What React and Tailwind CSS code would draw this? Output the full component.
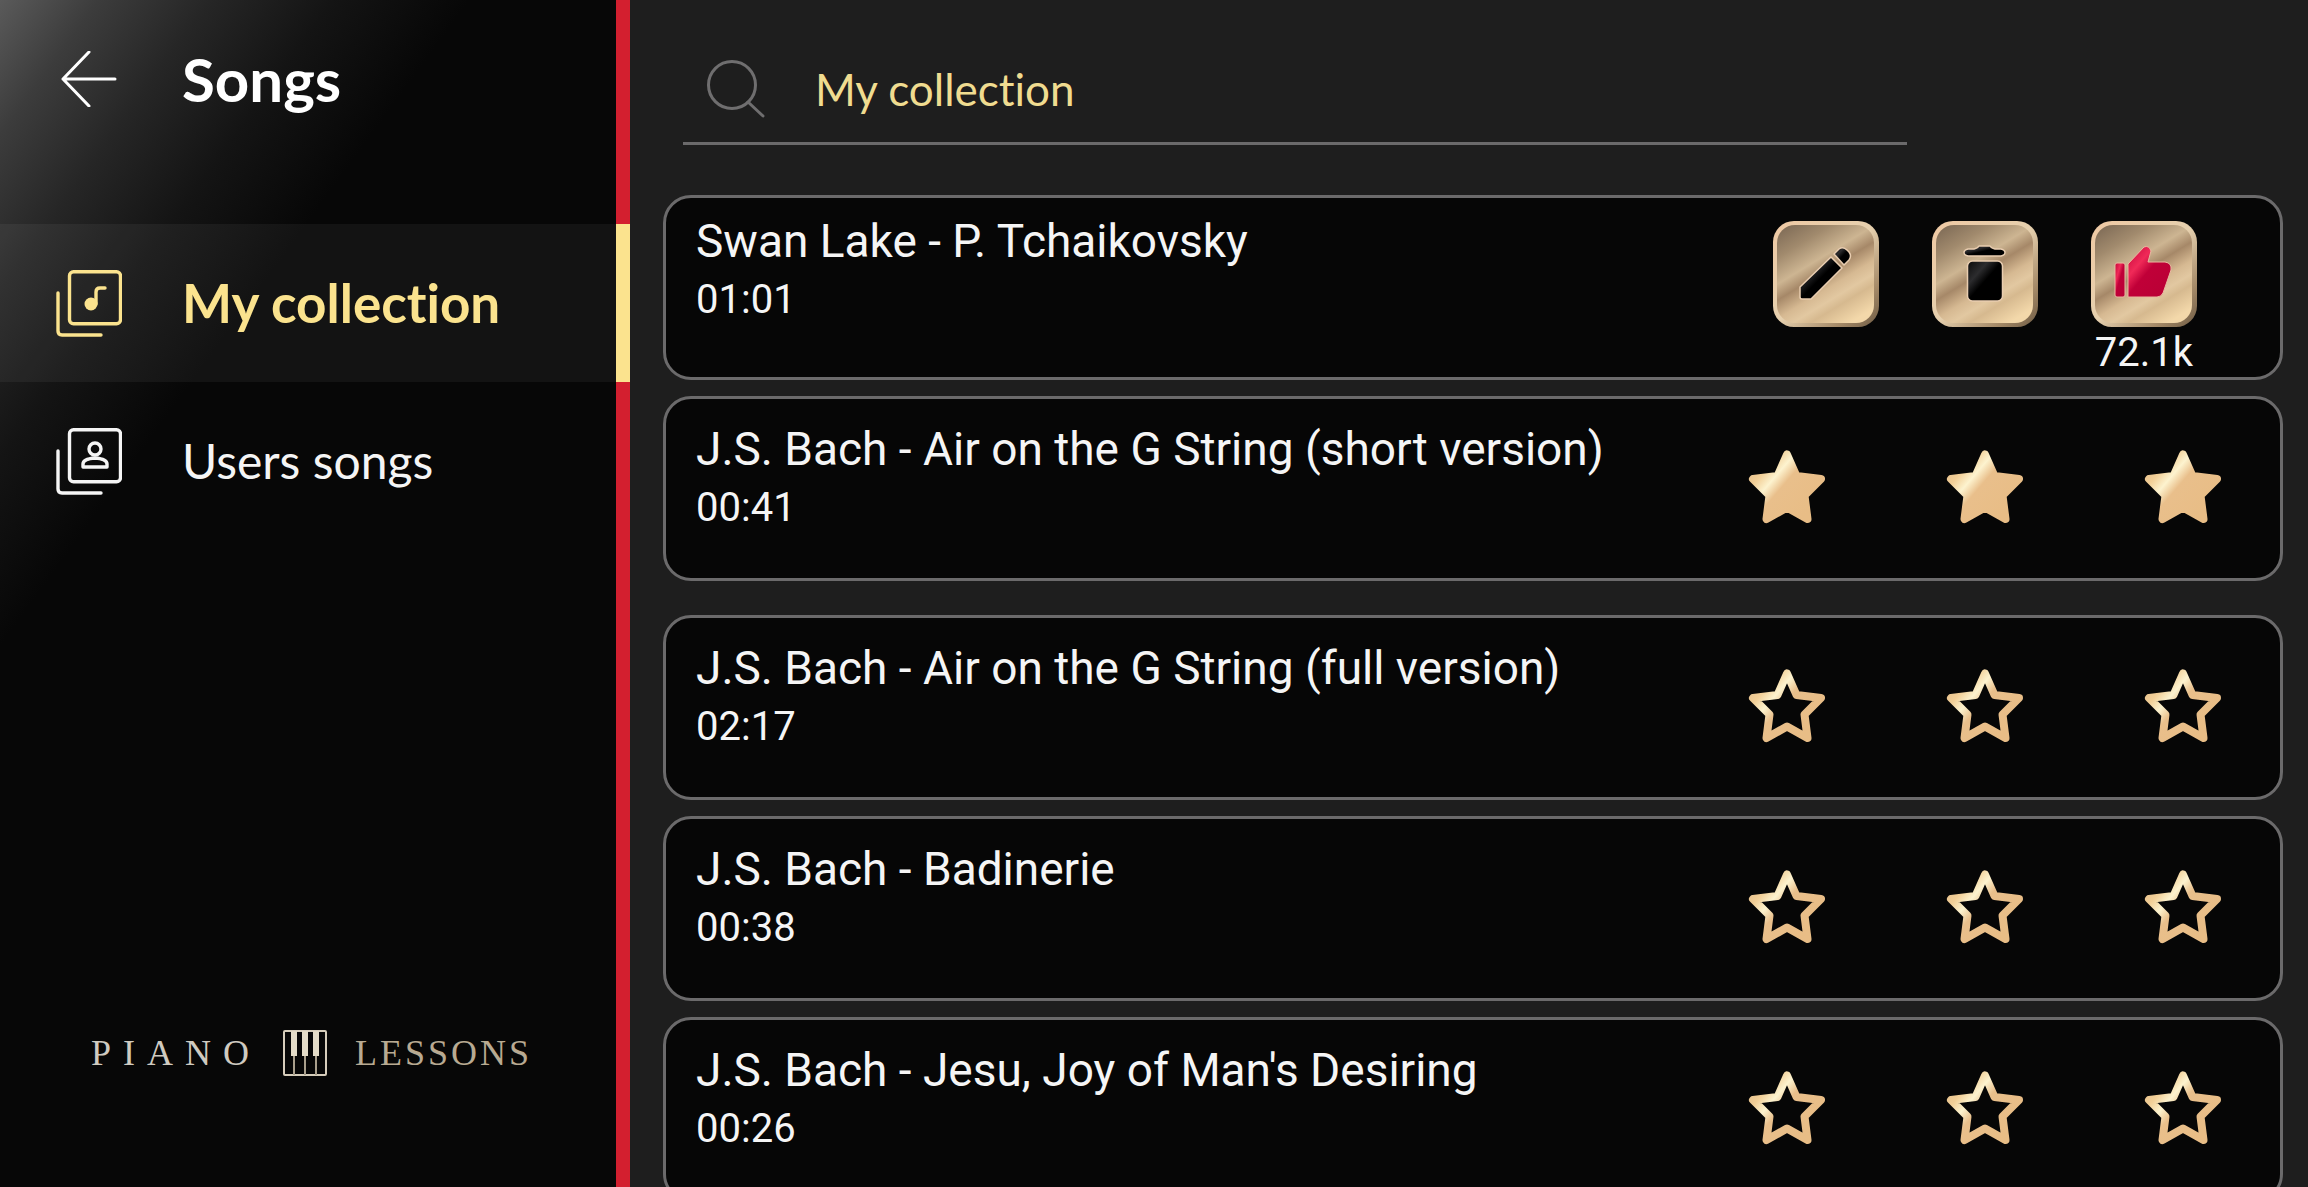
import React, { useState } from 'react';

const SONGS = [
  { title: "J.S. Bach - Air on the G String (short version)", time: '00:41', stars: 3 },
  { title: "J.S. Bach - Air on the G String (full version)", time: '02:17', stars: 0 },
  { title: "J.S. Bach - Badinerie", time: '00:38', stars: 0 },
  { title: "J.S. Bach - Jesu, Joy of Man's Desiring", time: '00:26', stars: 0 },
];

// Gradients shared by every icon on the page
function Gradients() {
  return (
    <svg className="absolute w-0 h-0" aria-hidden="true">
      <defs>
        <linearGradient id="star" gradientUnits="userSpaceOnUse" x1="18" y1="14" x2="74" y2="62">
          <stop offset="0" stopColor="#e3bd8a" />
          <stop offset="0.2" stopColor="#f2cf97" />
          <stop offset="0.36" stopColor="#fdf3cf" />
          <stop offset="0.52" stopColor="#e9bf8b" />
          <stop offset="1" stopColor="#e8bd86" />
        </linearGradient>
        <linearGradient id="face" x1="0.15" y1="0" x2="0.75" y2="1">
          <stop offset="0" stopColor="#84705a" />
          <stop offset="0.18" stopColor="#a18a6d" />
          <stop offset="0.38" stopColor="#cdb592" />
          <stop offset="0.5" stopColor="#a68868" />
          <stop offset="0.64" stopColor="#d6b992" />
          <stop offset="0.74" stopColor="#e2c8a1" />
          <stop offset="0.82" stopColor="#d6b98f" />
          <stop offset="1" stopColor="#f3d8aa" />
        </linearGradient>
        <linearGradient id="rim" x1="0" y1="0" x2="1" y2="1">
          <stop offset="0" stopColor="#efc9a4" />
          <stop offset="0.5" stopColor="#e6d0ae" />
          <stop offset="0.8" stopColor="#a58a68" />
          <stop offset="1" stopColor="#6d5a43" />
        </linearGradient>
        <linearGradient id="ink" x1="0" y1="0" x2="1" y2="1">
          <stop offset="0" stopColor="#0a0a0a" />
          <stop offset="0.3" stopColor="#2c2c2e" />
          <stop offset="0.5" stopColor="#000" />
          <stop offset="1" stopColor="#000" />
        </linearGradient>
        <linearGradient id="ruby" x1="0" y1="0" x2="1" y2="1">
          <stop offset="0" stopColor="#c4063a" />
          <stop offset="0.3" stopColor="#f02a58" />
          <stop offset="0.48" stopColor="#c00038" />
          <stop offset="1" stopColor="#b80035" />
        </linearGradient>
      </defs>
    </svg>
  );
}

function Star({ filled }) {
  return (
    <svg viewBox="0 0 94 94" className="w-[94px] h-[94px]" aria-hidden="true">
      <path
        d="M47 12.5 56.5 34 81 37 64.5 53.5 67.5 77 47 65.5 26.5 77 29.5 53.5 13 37 37.5 34Z"
        fill={filled ? 'url(#star)' : 'none'}
        stroke="url(#star)"
        strokeWidth="8"
        strokeLinejoin="round"
      />
    </svg>
  );
}

function GoldButton({ label, children }) {
  return (
    <button type="button" aria-label={label} className="block">
      <svg viewBox="0 0 106 106" className="w-[106px] h-[106px]" aria-hidden="true">
        <rect width="106" height="106" rx="21" fill="url(#rim)" />
        <rect x="4" y="4" width="97" height="98" rx="18" fill="url(#face)" />
        {children}
      </svg>
    </button>
  );
}

function PianoKeys() {
  return (
    <svg viewBox="0 0 44 46" className="w-[44px] h-[46px]" fill="none" stroke="#d6cdbb" aria-hidden="true">
      <rect x="1" y="1" width="42" height="44" rx="1" strokeWidth="2" />
      <path d="M11 26V45M22 26V45M33 26V45" strokeWidth="2" stroke="#a99f8c" />
      <path d="M11 1V26M22 1V26M33 1V26" strokeWidth="6" stroke="#e4dcc8" />
    </svg>
  );
}

function LibraryIcon({ children }) {
  return (
    <svg viewBox="0 0 66 67" className="w-[66px] h-[67px] shrink-0" fill="none" stroke="currentColor" strokeWidth="3.4" strokeLinecap="round" aria-hidden="true">
      <rect x="13.5" y="1.7" width="51" height="52" rx="4" />
      <path d="M2 23V61Q2 65 6 65H45" />
      {children}
    </svg>
  );
}

export default function App() {
  const [search, setSearch] = useState('My collection');

  return (
    <div className="flex h-screen overflow-hidden bg-[#1e1e1e] text-[#f5f5f5] font-[Roboto,sans-serif]">
      <Gradients />

      {/* Sidebar */}
      <aside className="flex flex-col w-[630px] shrink-0 font-[Lato,sans-serif] [font-variant-ligatures:none] bg-[linear-gradient(126deg,#5a5a5a_0px,#3c3c3c_80px,#262626_170px,#141414_270px,#070707_380px)]">
        <header className="flex items-center h-56 pb-[66px] pl-[61px] gap-[65px] border-r-[14px] border-[#d31f2f]">
          <button type="button" aria-label="Back">
            <svg viewBox="0 0 56 56" className="w-14 h-14" fill="none" stroke="#fff" strokeWidth="3" strokeLinecap="round" strokeLinejoin="round" aria-hidden="true">
              <path d="M54 28H2M28 1 2 28 28 55" />
            </svg>
          </button>
          <h1 className="text-[60px] leading-[64px] font-bold text-white">Songs</h1>
        </header>

        <nav>
          <a href="#collection" className="flex items-center h-[158px] pl-14 gap-[60px] bg-white/5 border-r-[14px] border-[#fbe38e] text-[#fbe38e] text-[53px] font-bold">
            <LibraryIcon>
              <circle cx="35" cy="34" r="6.5" fill="currentColor" stroke="none" />
              <path d="M40 34V22Q40 18 44 18H49" />
            </LibraryIcon>
            My collection
          </a>
          <a href="#users" className="flex items-center h-[158px] pl-14 gap-[60px] border-r-[14px] border-[#d31f2f] text-[48px]">
            <LibraryIcon>
              <circle cx="39" cy="21" r="6" />
              <path d="M27 39V36Q27 31 39 30 51 31 51 36V39Z" strokeLinejoin="round" />
            </LibraryIcon>
            Users songs
          </a>
        </nav>

        <div className="flex flex-1 items-end pb-[109px] pl-[91px] border-r-[14px] border-[#d31f2f] font-['Liberation_Serif',serif] text-[36px] leading-[50px]">
          <div className="flex items-center">
            <span className="w-48 tracking-[12px] text-[#cfcac0]">PIANO</span>
            <PianoKeys />
            <span className="ml-7 tracking-[3px] text-[#b8aa92]">LESSONS</span>
          </div>
        </div>
      </aside>

      {/* Song list */}
      <main className="flex-1 min-w-0 pl-[33px] pr-[25px]">
        <label className="flex items-center gap-[50px] ml-5 mr-[376px] mt-9 h-[109px] pl-6 border-b-[3px] border-[#6b6a6b]">
          <svg viewBox="0 0 58 58" className="w-[58px] h-[58px] shrink-0" fill="none" stroke="#6f6e6f" strokeWidth="3" strokeLinecap="round" aria-hidden="true">
            <circle cx="25" cy="25" r="23.5" />
            <path d="M41 42 56 56" />
          </svg>
          <input
            aria-label="Search songs"
            value={search}
            onChange={(e) => setSearch(e.target.value)}
            className="flex-1 min-w-0 bg-transparent outline-none text-[#f0dc90] text-[44px] leading-[56px] font-[Lato,sans-serif] [font-variant-ligatures:none]"
          />
        </label>

        <ul className="mt-[50px] flex flex-col gap-4">
          <li className="flex justify-between h-[185px] shrink-0 pl-[30px] pr-[83px] border-[3px] border-[#6b6a6b] rounded-[28px] bg-[#060606]">
            <div className="flex flex-col gap-1.5 pt-4">
              <h2 className="text-[46px] leading-[54px]">Swan Lake - P. Tchaikovsky</h2>
              <p className="text-[40px] leading-[52px]">01:01</p>
            </div>
            <div className="flex items-start gap-[53px] pt-[23px]">
              <GoldButton label="Edit">
                <g fill="url(#ink)" stroke="#e9cdb0" strokeWidth="1.5" strokeLinejoin="round">
                  <path d="M27 66 58 36 69 47 38 78H29Q27 78 27 76Z" />
                  <path d="M61 33 66 28Q70 25 74 29L76 31Q79 35 76 39L71 44Z" />
                </g>
              </GoldButton>
              <GoldButton label="Delete">
                <g fill="url(#ink)" stroke="#e9cdb0" strokeWidth="1.5" strokeLinejoin="round">
                  <path d="M36 28H42Q46 27 47 25H58Q59 27 63 28H69Q73 29 73 31.5T69 35H36Q32 34 32 31.5T36 28Z" />
                  <rect x="35.5" y="40" width="35" height="40" rx="5" />
                </g>
              </GoldButton>
              <div className="flex flex-col items-center">
                <GoldButton label="Like">
                  <g fill="url(#ruby)" stroke="#e9b8a0" strokeWidth="1" strokeLinejoin="round">
                    <rect x="24" y="42" width="10" height="34" rx="2" />
                    <path d="M37 43 53 26Q58 24 60 30L57 41H74Q81 42 80 49L72 72Q70 76 66 76H37Z" />
                  </g>
                </GoldButton>
                <span className="text-[40px] leading-[52px]">72.1k</span>
              </div>
            </div>
          </li>

          {SONGS.map((song, i) => (
            <li key={song.title} className={`flex justify-between items-center h-[185px] shrink-0 pl-[30px] pr-[50px] border-[3px] border-[#6b6a6b] rounded-[28px] bg-[#060606] ${i === 1 ? 'mt-[18px]' : ''}`}>
              <div className="flex flex-col gap-1.5 self-start pt-[23px]">
                <h2 className="text-[46px] leading-[54px]">{song.title}</h2>
                <p className="text-[40px] leading-[52px]">{song.time}</p>
              </div>
              <div className="flex gap-[104px]" role="img" aria-label={`${song.stars} of 3 stars`}>
                {[0, 1, 2].map((n) => <Star key={n} filled={n < song.stars} />)}
              </div>
            </li>
          ))}
        </ul>
      </main>
    </div>
  );
}
